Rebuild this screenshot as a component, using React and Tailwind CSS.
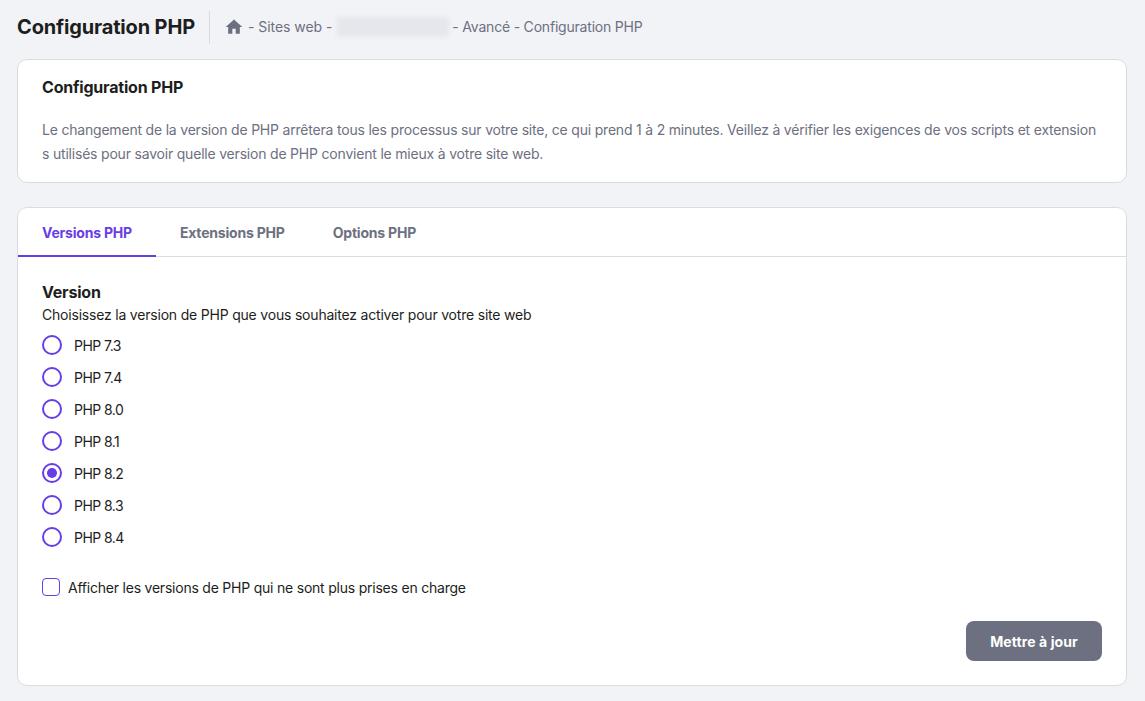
const VERSIONS = ['7.3', '7.4', '8.0', '8.1', '8.2', '8.3', '8.4'];
const TABS = ['Versions PHP', 'Extensions PHP', 'Options PHP'];

function HomeIcon() {
  return (
    <svg className="w-5 h-5 fill-[#6d7081] mr-[4px]" viewBox="0 0 24 24">
      <path d="M10 20v-6h4v6h5v-8h3L12 3 2 12h3v8z" />
    </svg>
  );
}

function Radio({ label, checked }) {
  return (
    <div className="flex items-center h-[32px]">
      <span className="w-5 h-5 rounded-full border-2 border-[#673de6] flex items-center justify-center mr-[12px]">
        {checked && <span className="w-[10px] h-[10px] rounded-full bg-[#673de6]" />}
      </span>
      <span className="text-[14px] text-[#1d1e20] tracking-[-0.55px]">{label}</span>
    </div>
  );
}

export default function App() {
  return (
    <div className="min-h-[701px] bg-[#f2f3f6] pl-[17px] pr-[18px] pb-[15px] text-[#1d1e20] font-['Inter',sans-serif] tracking-[-0.2px]">
      <div className="flex items-center h-[59px] pb-[5px]">
        <h1 className="text-[20px] font-bold pr-[14px] tracking-[-0.16px]">Configuration PHP</h1>
        <div className="flex items-center h-[33px] border-l border-[#dadce0] pl-[14px] pb-[1px] text-[14px] text-[#6d7081]">
          <HomeIcon />
          <span className="tracking-[-0.05px]">- Sites web -</span>
          <span className="w-[112px] h-5 ml-[5px] mr-[3px] bg-[#e6e7ec] blur-[2px]" />
          <span>- Avancé - Configuration PHP</span>
        </div>
      </div>

      <div className="bg-white border border-[#dadce0] rounded-[10px] h-[124px] px-[24px] pt-[17px]">
        <h2 className="text-[16px] font-bold leading-[20px] tracking-[-0.2px]">Configuration PHP</h2>
        <p className="mt-[21px] text-[14px] leading-[24px] text-[#6d7081] break-all">
          Le changement de la version de PHP arrêtera tous les processus sur votre site, ce qui prend 1 à 2 minutes. Veillez à vérifier les exigences de vos scripts et extensions utilisés pour savoir quelle version de PHP convient le mieux à votre site web.
        </p>
      </div>

      <div className="mt-[24px] bg-white border border-[#dadce0] rounded-[10px] h-[479px] flex flex-col">
        <div className="flex border-b border-[#dadce0] h-[49px]">
          {TABS.map((tab, i) => (
            <div
              key={tab}
              className={`px-[24px] h-[49px] pt-[2px] flex items-center text-[14px] font-bold border-b-2 ${i === 0 ? 'text-[#673de6] border-[#673de6]' : 'text-[#6d7081] border-transparent'}`}
            >
              {tab}
            </div>
          ))}
        </div>
        <div className="flex-1 px-[24px] pt-[25px] pb-[24px] flex flex-col">
          <h3 className="text-[16px] font-bold leading-[20px]">Version</h3>
          <p className="mt-[3px] text-[14px] leading-[20px]">Choisissez la version de PHP que vous souhaitez activer pour votre site web</p>
          <div className="mt-[4px]">
            {VERSIONS.map(v => <Radio key={v} label={`PHP ${v}`} checked={v === '8.2'} />)}
          </div>
          <label className="flex items-center mt-[24px] h-[20px]">
            <span className="w-[18px] h-[18px] rounded-[4px] border border-[#673de6] mr-[8px]" />
            <span className="text-[14px] tracking-[-0.22px]">Afficher les versions de PHP qui ne sont plus prises en charge</span>
          </label>
          <div className="mt-auto flex justify-end">
            <button className="w-[136px] h-[40px] rounded-[8px] bg-[#6d7081] text-white text-[14px] font-bold tracking-[0.1px]">Mettre à jour</button>
          </div>
        </div>
      </div>
    </div>
  );
}
